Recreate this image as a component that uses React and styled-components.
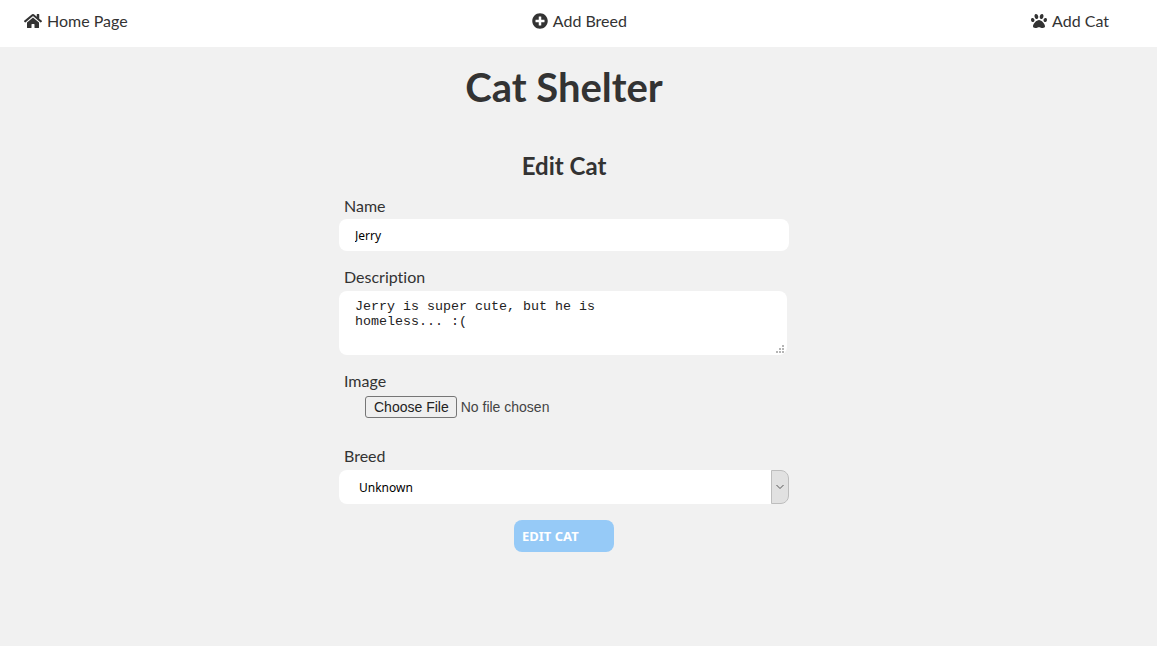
import React from "react";
import styled, { createGlobalStyle } from "styled-components";
import { FaHome, FaPlusCircle, FaPaw } from "react-icons/fa";

const GlobalStyle = createGlobalStyle`
  *, *::before, *::after { box-sizing: border-box; }
  body {
    margin: 0;
    background: #f1f1f1;
    color: #333;
    font-family: Lato, "Liberation Sans", sans-serif;
    font-size: 16px;
    font-variant-ligatures: none;
    line-height: 20px;
  }
`;

const Nav = styled.nav`
  background: #fff;
  padding: 11px 48px 16px 24px;
`;

const NavList = styled.ul`
  display: flex;
  justify-content: space-between;
  margin: 0;
  padding: 0;
  list-style: none;
`;

const NavLink = styled.a`
  display: flex;
  align-items: center;
  gap: 5px;
  color: #333;
  text-decoration: none;
`;

const Main = styled.main`
  display: flex;
  flex-direction: column;
  align-items: center;
  padding: 16px 29px 40px 0;
`;

const Title = styled.h1`
  margin: 0 0 39px;
  font-size: 40px;
  line-height: 48px;
`;

const Form = styled.form`
  display: flex;
  flex-direction: column;
  width: 450px;
  max-width: 100%;
`;

const FormTitle = styled.h2`
  margin: 0 0 14px;
  font-size: 24px;
  line-height: 32px;
  text-align: center;
`;

const Field = styled.div`
  display: flex;
  flex-direction: column;
  margin-bottom: ${(p) => p.$space}px;
`;

const Label = styled.label`
  padding-left: 5px;
  margin-bottom: ${(p) => p.$gap || 3}px;
`;

const TextInput = styled.input`
  height: 32px;
  padding: 0 16px;
  border: 0;
  border-radius: 8px;
  background: #fff;
  color: #000;
  font: 12px "Noto Sans", sans-serif;
`;

const TextAreaBox = styled.div`
  position: relative;
  margin-right: 2px;
`;

const TextArea = styled.textarea`
  display: block;
  width: 100%;
  height: 64px;
  padding: 8px 120px 8px 16px;
  border: 0;
  border-radius: 8px;
  background: #fff;
  color: #222;
  font-family: "Liberation Mono", monospace;
  line-height: 15px;
  resize: none;
`;

const Grip = styled.svg`
  position: absolute;
  right: 2px;
  bottom: 1px;
  pointer-events: none;
`;

const FileInput = styled.input`
  height: 22px;
  margin: 2px 0 0 26px;
  color: #444;
  font: 14px/16px "Liberation Sans", sans-serif;

  &::file-selector-button {
    height: 22px;
    margin: 0 4px 0 0;
    padding: 0 7px 0 8px;
    border: 1px solid #767676;
    border-radius: 3px;
    background: #efefef;
    color: #222;
    font: inherit;
  }
`;

const SelectBox = styled.div`
  display: flex;
  position: relative;
  height: 34px;
`;

const Select = styled.select`
  appearance: none;
  flex: 1;
  padding: 0 36px 0 20px;
  border: 0;
  border-radius: 8px;
  background: #fff;
  color: #000;
  font: 12px "Noto Sans", sans-serif;
`;

const SelectArrow = styled.span`
  position: absolute;
  top: 0;
  right: 0;
  bottom: 0;
  display: flex;
  align-items: center;
  justify-content: center;
  width: 18px;
  border: 1px solid #bdbdbd;
  border-radius: 0 8px 8px 0;
  background: #e1e1e1;
  pointer-events: none;
`;

const SubmitButton = styled.button`
  align-self: center;
  width: 100px;
  height: 32px;
  padding: 0 8px;
  border: 0;
  border-radius: 8px;
  background: #96caf7;
  color: #fff;
  font: bold 13px "Noto Sans", sans-serif;
  text-align: left;
  text-transform: uppercase;
  cursor: pointer;
`;

export default function App() {
  return (
    <>
      <GlobalStyle />
      <Nav>
        <NavList>
          <li><NavLink href="#home"><FaHome size={18} />Home Page</NavLink></li>
          <li><NavLink href="#add-breed"><FaPlusCircle size={16} />Add Breed</NavLink></li>
          <li><NavLink href="#add-cat"><FaPaw size={16} />Add Cat</NavLink></li>
        </NavList>
      </Nav>
      <Main>
        <Title>Cat Shelter</Title>
        <Form onSubmit={(e) => e.preventDefault()}>
          <FormTitle>Edit Cat</FormTitle>
          <Field $space={16}>
            <Label htmlFor="name">Name</Label>
            <TextInput id="name" type="text" defaultValue="Jerry" />
          </Field>
          <Field $space={16}>
            <Label htmlFor="description" $gap={4}>Description</Label>
            <TextAreaBox>
              <TextArea
                id="description"
                spellCheck={false}
                defaultValue="Jerry is super cute, but he is homeless... :("
              />
              <Grip width="9" height="9" viewBox="0 0 9 9" fill="#b5b5b5" aria-hidden="true">
                <path d="M6 0h2v2H6zM6 3h2v2H6zM3 3h2v2H3zM6 6h2v2H6zM3 6h2v2H3zM0 6h2v2H0z" />
              </Grip>
            </TextAreaBox>
          </Field>
          <Field $space={28}>
            <Label htmlFor="image">Image</Label>
            <FileInput id="image" type="file" />
          </Field>
          <Field $space={16}>
            <Label htmlFor="breed" $gap={4}>Breed</Label>
            <SelectBox>
              <Select id="breed" defaultValue="Unknown">
                <option>Unknown</option>
              </Select>
              <SelectArrow>
                <svg width="8" height="6" viewBox="0 0 8 6" fill="none" stroke="#555" aria-hidden="true">
                  <path d="M.5 1 4 4.5 7.500 1" />
                </svg>
              </SelectArrow>
            </SelectBox>
          </Field>
          <SubmitButton type="submit">Edit Cat</SubmitButton>
        </Form>
      </Main>
    </>
  );
}
